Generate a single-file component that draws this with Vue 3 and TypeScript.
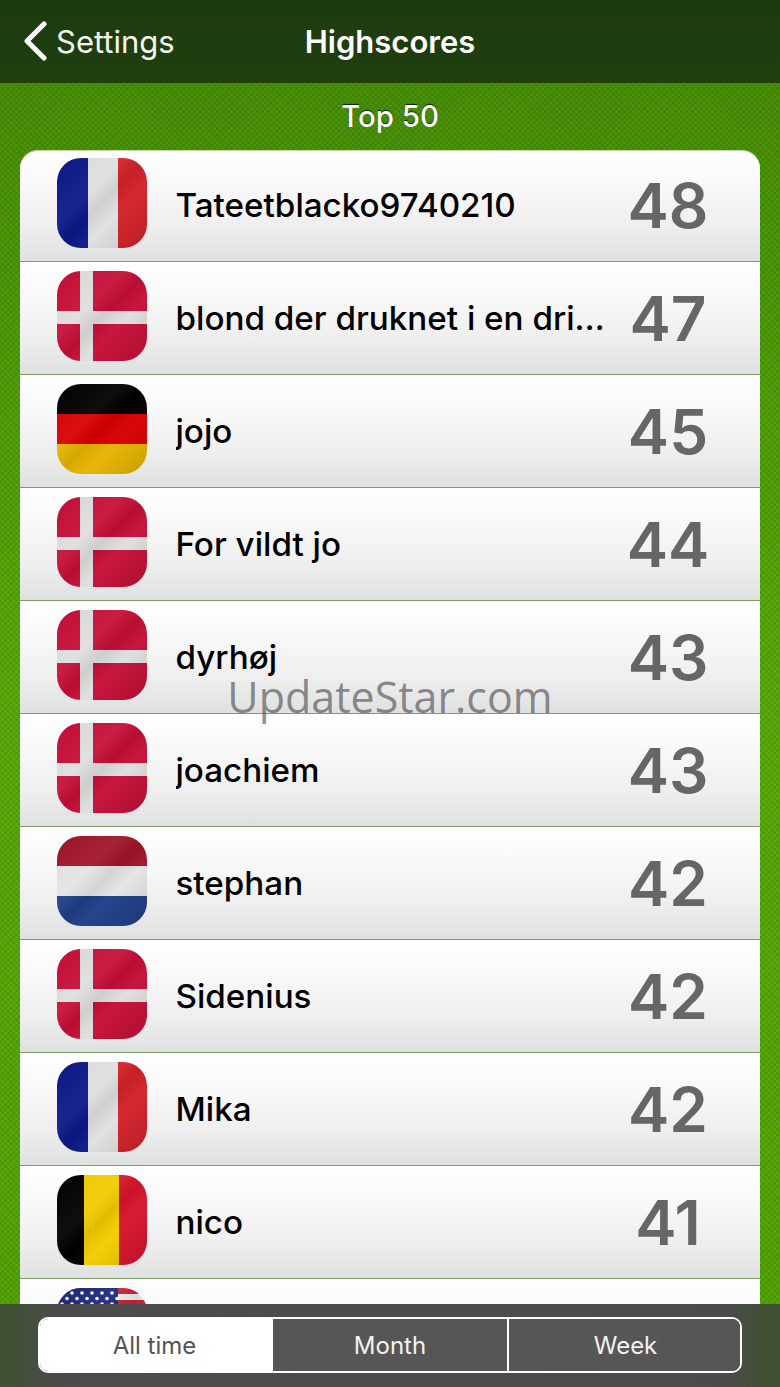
<template>
  <div class="screen">
    <header class="nav">
      <a class="back">
        <svg class="chevron" width="26" height="40" viewBox="0 0 26 40">
          <path d="M23 3 L6 20 L23 37" fill="none" stroke="#fff" stroke-width="5" stroke-linecap="round" stroke-linejoin="round" />
        </svg>
        <span>Settings</span>
      </a>
      <h1>Highscores</h1>
    </header>

    <main class="content">
      <h2>Top 50</h2>
      <ul class="list">
        <li v-for="row in rows" :key="row.name + row.score" class="row">
          <div class="flag">
            <svg width="90" height="90" viewBox="0 0 90 90">
              <template v-if="row.flag === 'fr'">
                <rect width="31" height="90" fill="#0c1888" />
                <rect x="31" width="30" height="90" fill="#e0e0e0" />
                <rect x="61" width="29" height="90" fill="#d4222a" />
              </template>
              <template v-else-if="row.flag === 'dk'">
                <rect width="90" height="90" fill="#c60f38" />
                <rect x="23" width="13" height="90" fill="#dedede" />
                <rect y="40" width="90" height="13" fill="#dedede" />
              </template>
              <template v-else-if="row.flag === 'de'">
                <rect width="90" height="30" fill="#000" />
                <rect y="30" width="90" height="30" fill="#d80000" />
                <rect y="60" width="90" height="30" fill="#e6b400" />
              </template>
              <template v-else-if="row.flag === 'nl'">
                <rect width="90" height="30" fill="#a01528" />
                <rect y="30" width="90" height="30" fill="#e4e4e4" />
                <rect y="60" width="90" height="30" fill="#1f3f88" />
              </template>
              <template v-else-if="row.flag === 'be'">
                <rect width="27" height="90" fill="#000" />
                <rect x="27" width="35" height="90" fill="#f2cc00" />
                <rect x="62" width="28" height="90" fill="#d8142c" />
              </template>
              <template v-else>
                <rect width="90" height="90" fill="#ececec" />
                <rect width="90" height="6" fill="#c8203a" />
                <rect y="12" width="90" height="6" fill="#c8203a" />
                <rect width="61" height="48" fill="#1c2a7c" />
                <circle v-for="s in stars" :key="s.x + '-' + s.y" :cx="s.x" :cy="s.y" r="1.8" fill="#fff" />
              </template>
            </svg>
          </div>
          <span class="name">{{ row.name }}</span>
          <span class="score">{{ row.score }}</span>
        </li>
      </ul>
      <div class="watermark">UpdateStar.com</div>
    </main>

    <footer class="tabbar">
      <div class="segments">
        <button v-for="tab in tabs" :key="tab" class="segment" :class="{ active: tab === current }">{{ tab }}</button>
      </div>
    </footer>
  </div>
</template>

<script setup lang="ts">
import { ref } from 'vue'

interface Row {
  flag: string
  name: string
  score: number | string
}

const rows: Row[] = [
  { flag: 'fr', name: 'Tateetblacko9740210', score: 48 },
  { flag: 'dk', name: 'blond der druknet i en drink med is', score: 47 },
  { flag: 'de', name: 'jojo', score: 45 },
  { flag: 'dk', name: 'For vildt jo', score: 44 },
  { flag: 'dk', name: 'dyrhøj', score: 43 },
  { flag: 'dk', name: 'joachiem', score: 43 },
  { flag: 'nl', name: 'stephan', score: 42 },
  { flag: 'dk', name: 'Sidenius', score: 42 },
  { flag: 'fr', name: 'Mika', score: 42 },
  { flag: 'be', name: 'nico', score: 41 },
  { flag: 'us', name: '', score: '' }
]

const stars: { x: number; y: number }[] = []
for (let r = 0; r < 4; r++) {
  for (let c = 0; c < 6; c++) {
    stars.push({ x: 5 + c * 10 + (r % 2) * 5, y: 5 + r * 5.5 })
  }
}

const tabs = ['All time', 'Month', 'Week']
const current = ref('All time')
</script>

<style>
html,
body {
  margin: 0;
  background: #4a8f08;
}
</style>

<style scoped>
.screen {
  width: 780px;
  height: 1387px;
  display: flex;
  flex-direction: column;
  overflow: hidden;
  font-family: Inter, "Liberation Sans", sans-serif;
}

.nav {
  height: 83px;
  flex: none;
  box-sizing: border-box;
  position: relative;
  display: flex;
  align-items: center;
  justify-content: center;
  background: linear-gradient(#1c3a10, #20400f);
  color: #fff;
}

.nav h1 {
  margin: 0;
  font-size: 31px;
  font-weight: 600;
}

.back {
  position: absolute;
  left: 21px;
  top: 21px;
  display: flex;
  align-items: center;
  gap: 9px;
  font-size: 31px;
  color: #f4f6f2;
}

.content {
  position: relative;
  flex: 1;
  min-height: 0;
  overflow: hidden;
  padding: 0 20px;
  background-color: #4f9c08;
  background-image:
    repeating-linear-gradient(45deg, rgba(0, 0, 0, 0.07) 0 2px, transparent 2px 4px),
    repeating-linear-gradient(-45deg, rgba(0, 0, 0, 0.07) 0 2px, transparent 2px 4px),
    linear-gradient(#499406, #5cae0c 50%, #58a80a);
}

.content h2 {
  margin: 0;
  height: 67px;
  line-height: 67px;
  text-align: center;
  font-size: 29.5px;
  font-weight: 500;
  color: #fff;
  text-shadow: 0 -1px 1px rgba(0, 0, 0, 0.8);
}

.list {
  list-style: none;
  margin: 0;
  padding: 0;
  border-radius: 18px 18px 0 0;
  overflow: hidden;
  border-top: 1px solid #c6d8ae;
}

.row {
  height: 113px;
  box-sizing: border-box;
  display: flex;
  align-items: center;
  padding: 0 34px 0 37px;
  background: linear-gradient(#ffffff, #f8f8f8 35%, #eeeeee 70%, #dfe0e0);
  border-bottom: 1px solid #7f9c62;
}

.row:first-child {
  height: 111px;
  padding-bottom: 2px;
}

.flag {
  position: relative;
  width: 90px;
  height: 90px;
  flex: none;
  margin-bottom: 4px;
  border-radius: 24px;
  overflow: hidden;
}

.flag svg {
  display: block;
}

.flag::after {
  content: "";
  position: absolute;
  inset: 0;
  background: linear-gradient(135deg, rgba(0, 0, 0, 0.04) 0%, rgba(255, 255, 255, 0.06) 36%, rgba(0, 0, 0, 0.07) 50%, rgba(255, 255, 255, 0.03) 64%, rgba(0, 0, 0, 0.12) 100%);
}

.name {
  flex: 1;
  min-width: 0;
  margin-left: 28.5px;
  font-size: 33.2px;
  font-weight: 500;
  color: #000;
  white-space: nowrap;
  overflow: hidden;
  text-overflow: ellipsis;
}

.score {
  width: 116px;
  flex: none;
  margin-left: 4px;
  text-align: center;
  font-size: 62px;
  font-weight: 600;
  color: #666;
}

.watermark {
  position: absolute;
  left: 0;
  right: 0;
  top: 584px;
  text-align: center;
  font-family: "Open Sans", sans-serif;
  font-size: 43px;
  color: rgba(70, 70, 70, 0.62);
  pointer-events: none;
}

.tabbar {
  height: 83px;
  flex: none;
  box-sizing: border-box;
  padding: 13px 38px 14px;
  background: linear-gradient(90deg, #3f5330 0, #4b4b4a 60px, #4d4d4d 50%, #4b4b4a 720px, #3f5330 100%);
}

.segments {
  display: grid;
  grid-template-columns: 233px 234px 1fr;
  height: 56px;
  border: 2px solid #fff;
  border-radius: 10px;
  box-sizing: border-box;
  overflow: hidden;
}

.segment {
  border: 0;
  padding: 0;
  font: inherit;
  font-size: 24px;
  color: #f2f2f2;
  background: #565656;
}

.segment:last-child {
  border-left: 2px solid #fff;
  padding-left: 2px;
}

.segment.active {
  padding-right: 4px;
  background: #fff;
  color: #555;
}
</style>
